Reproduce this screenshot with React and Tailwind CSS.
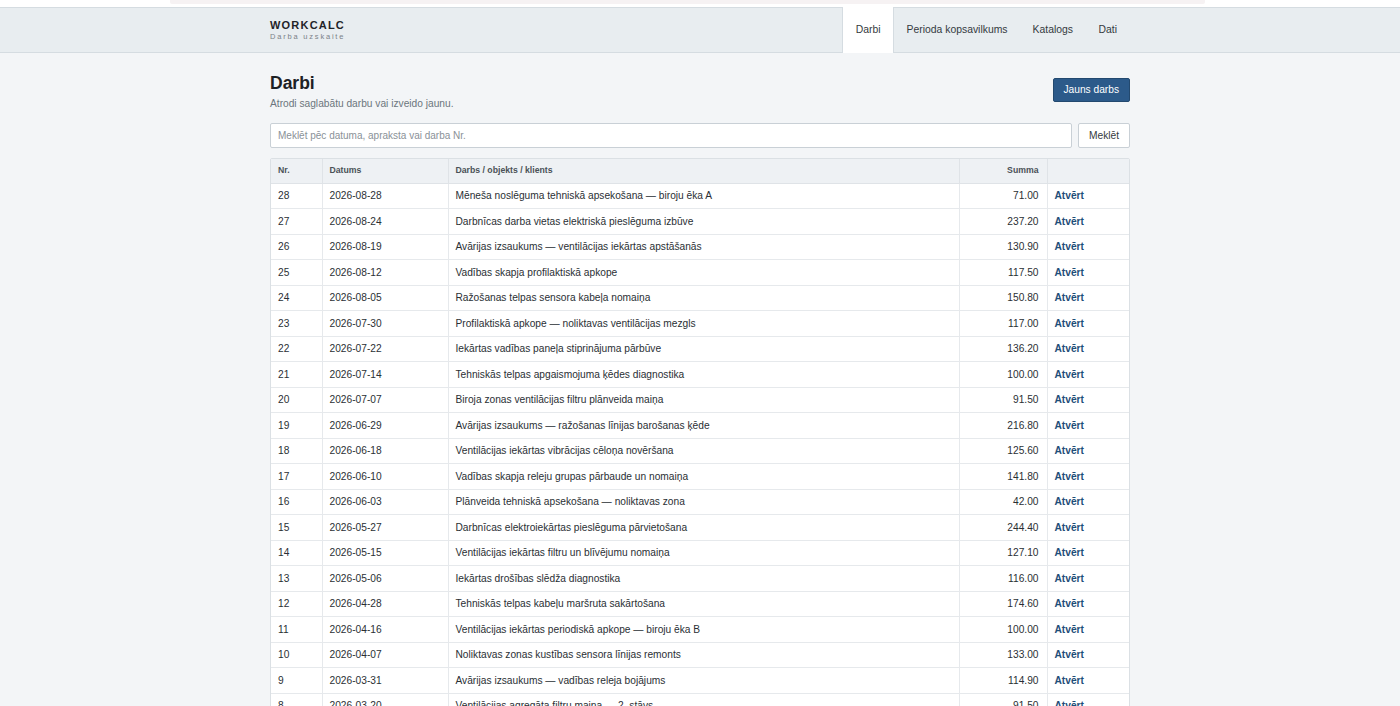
import React from "react";

const rows = [
  [28, "2026-08-28", "Mēneša noslēguma tehniskā apsekošana — biroju ēka A", "71.00"],
  [27, "2026-08-24", "Darbnīcas darba vietas elektriskā pieslēguma izbūve", "237.20"],
  [26, "2026-08-19", "Avārijas izsaukums — ventilācijas iekārtas apstāšanās", "130.90"],
  [25, "2026-08-12", "Vadības skapja profilaktiskā apkope", "117.50"],
  [24, "2026-08-05", "Ražošanas telpas sensora kabeļa nomaiņa", "150.80"],
  [23, "2026-07-30", "Profilaktiskā apkope — noliktavas ventilācijas mezgls", "117.00"],
  [22, "2026-07-22", "Iekārtas vadības paneļa stiprinājuma pārbūve", "136.20"],
  [21, "2026-07-14", "Tehniskās telpas apgaismojuma ķēdes diagnostika", "100.00"],
  [20, "2026-07-07", "Biroja zonas ventilācijas filtru plānveida maiņa", "91.50"],
  [19, "2026-06-29", "Avārijas izsaukums — ražošanas līnijas barošanas ķēde", "216.80"],
  [18, "2026-06-18", "Ventilācijas iekārtas vibrācijas cēloņa novēršana", "125.60"],
  [17, "2026-06-10", "Vadības skapja releju grupas pārbaude un nomaiņa", "141.80"],
  [16, "2026-06-03", "Plānveida tehniskā apsekošana — noliktavas zona", "42.00"],
  [15, "2026-05-27", "Darbnīcas elektroiekārtas pieslēguma pārvietošana", "244.40"],
  [14, "2026-05-15", "Ventilācijas iekārtas filtru un blīvējumu nomaiņa", "127.10"],
  [13, "2026-05-06", "Iekārtas drošības slēdža diagnostika", "116.00"],
  [12, "2026-04-28", "Tehniskās telpas kabeļu maršruta sakārtošana", "174.60"],
  [11, "2026-04-16", "Ventilācijas iekārtas periodiskā apkope — biroju ēka B", "100.00"],
  [10, "2026-04-07", "Noliktavas zonas kustības sensora līnijas remonts", "133.00"],
  [9, "2026-03-31", "Avārijas izsaukums — vadības releja bojājums", "114.90"],
  [8, "2026-03-20", "Ventilācijas agregāta filtru maiņa — 2. stāvs", "91.50"],
];

export default function App() {
  return (
    <div
      className="min-h-screen bg-[#f3f5f7] text-[#212529]"
      style={{ fontFamily: '"Liberation Sans", Arial, sans-serif' }}
    >
      <div className="h-[7px] bg-white flex justify-start">
        <div className="ml-[170px] w-[1035px] h-[4px] bg-[#f6f2f3] rounded-b-[2px]" />
      </div>
      <header className="h-[46px] bg-[#e8edf0] border-y border-[#d5dce1]">
        <div className="w-[860px] mx-auto flex items-stretch justify-between h-full">
          <div className="flex flex-col justify-center pt-[1px]">
            <div className="text-[11px] font-bold tracking-[1.2px] leading-[13px] text-[#1f2328]">WORKCALC</div>
            <div className="text-[7.5px] tracking-[1.8px] leading-[10px] text-[#7b8288]">Darba uzskaite</div>
          </div>
          <nav className="flex items-stretch -mt-px -mb-px text-[10.4px] text-[#343a40]">
            <div className="px-[12.5px] flex items-center bg-white border-x border-[#d5dce1]">Darbi</div>
            <div className="px-[12.5px] flex items-center">Perioda kopsavilkums</div>
            <div className="px-[12.5px] flex items-center">Katalogs</div>
            <div className="px-[13px] flex items-center">Dati</div>
          </nav>
        </div>
      </header>

      <main className="w-[860px] mx-auto pt-[19px]">
        <div className="flex items-start justify-between">
          <div>
            <h1 className="text-[17.5px] font-bold leading-[22px] text-[#1d2125]">Darbi</h1>
            <p className="text-[10.2px] text-[#6c757d] mt-[3px] leading-[13px]">Atrodi saglabātu darbu vai izveido jaunu.</p>
          </div>
          <button className="mt-[6px] h-[24px] px-[10px] bg-[#2c5a8a] text-white text-[10.2px] rounded-[2px] border border-[#23496f]">
            Jauns darbs
          </button>
        </div>

        <div className="flex gap-[6px] mt-[13px]">
          <input
            className="flex-1 h-[25px] bg-white border border-[#c9d0d6] rounded-[2px] px-[7px] text-[10px] placeholder:text-[#8a9197] outline-none"
            placeholder="Meklēt pēc datuma, apraksta vai darba Nr."
          />
          <button className="h-[25px] w-[52px] bg-white border border-[#c9d0d6] rounded-[2px] text-[10.2px] text-[#343a40]">
            Meklēt
          </button>
        </div>

        <div className="mt-[10px] border border-[#dbe0e4] rounded-[2px] bg-white overflow-hidden">
          <table className="w-full border-collapse text-[10.2px] text-[#2a2f34] table-fixed">
            <colgroup>
              <col className="w-[51px]" />
              <col className="w-[126px]" />
              <col className="w-[511px]" />
              <col className="w-[88px]" />
              <col className="w-[84px]" />
            </colgroup>
            <thead>
              <tr className="bg-[#eef1f4] text-[8.7px] font-bold text-[#4a5157] h-[24px]">
                <th className="text-left px-[7px] border-r border-b border-[#dfe3e7]">Nr.</th>
                <th className="text-left px-[7px] border-r border-b border-[#dfe3e7]">Datums</th>
                <th className="text-left px-[7px] border-r border-b border-[#dfe3e7]">Darbs / objekts / klients</th>
                <th className="text-right px-[8px] border-r border-b border-[#dfe3e7]">Summa</th>
                <th className="border-b border-[#dfe3e7]"></th>
              </tr>
            </thead>
            <tbody>
              {rows.map(([n, d, t, s]) => (
                <tr key={n} className="h-[25.5px]">
                  <td className="px-[7px] border-r border-b border-[#e6e9ec]">{n}</td>
                  <td className="px-[7px] border-r border-b border-[#e6e9ec]">{d}</td>
                  <td className="px-[7px] border-r border-b border-[#e6e9ec] whitespace-nowrap">{t}</td>
                  <td className="px-[8px] text-right border-r border-b border-[#e6e9ec]">{s}</td>
                  <td className="px-[7px] border-b border-[#e6e9ec] font-bold text-[#1f4e79]">Atvērt</td>
                </tr>
              ))}
            </tbody>
          </table>
        </div>
      </main>
    </div>
  );
}
